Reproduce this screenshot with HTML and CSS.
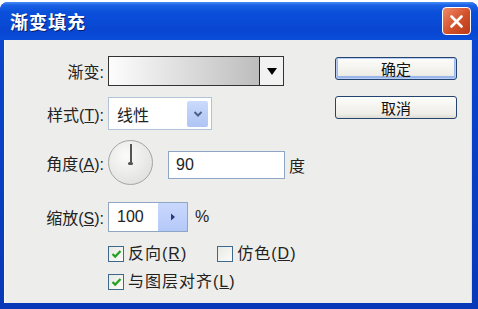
FILE: index.html
```html
<!DOCTYPE html>
<html lang="zh-CN">
<head>
    <meta charset="UTF-8">
    <meta name="viewport" content="width=device-width, initial-scale=1.0">
    <title>渐变填充</title>
    <link rel="stylesheet" href="styles.css">
</head>
<body>
    <div class="window">
        <div class="titlebar">
            <span class="title">渐变填充</span>
            <button class="close" aria-label="关闭">
                <svg width="15" height="15" viewBox="0 0 15 15">
                    <path d="M2.5 2.5 L12.5 12.5 M12.5 2.5 L2.5 12.5" stroke="#fff" stroke-width="2.6" stroke-linecap="round"/>
                </svg>
            </button>
        </div>
        <div class="content">
            <div class="form">
                <div class="row row-gradient">
                    <span class="label">渐变:</span>
                    <div class="gradient-box">
                        <div class="swatch"></div>
                        <div class="drop"><span class="tri"></span></div>
                    </div>
                </div>
                <div class="row row-style">
                    <span class="label">样式(<u>T</u>):</span>
                    <div class="select">
                        <span class="select-text">线性</span>
                        <span class="select-btn">
                            <svg width="10" height="8" viewBox="0 0 10 8">
                                <path d="M1.5 2 L5 5.5 L8.5 2" fill="none" stroke="#4d6185" stroke-width="2"/>
                            </svg>
                        </span>
                    </div>
                </div>
                <div class="row row-angle">
                    <span class="label">角度(<u>A</u>):</span>
                    <div class="dial"><span class="needle"></span><span class="hub"></span></div>
                    <div class="field angle-field">90</div>
                    <span class="unit">度</span>
                </div>
                <div class="row row-scale">
                    <span class="label">缩放(<u>S</u>):</span>
                    <div class="field scale-field">
                        <span class="scale-value">100</span>
                        <span class="scale-btn">
                            <svg width="6" height="8" viewBox="0 0 6 8">
                                <path d="M1 0.5 L5 4 L1 7.5 Z" fill="#2a3b7a"/>
                            </svg>
                        </span>
                    </div>
                    <span class="unit unit-pct">%</span>
                </div>
                <div class="check-row">
                    <label class="check"><span class="box checked"><svg width="11" height="10" viewBox="0 0 11 10"><path d="M1.5 5 L4.2 7.6 L9.5 2" fill="none" stroke="#21a121" stroke-width="2.2"/></svg></span><span class="check-text">反向(<u>R</u>)</span></label>
                    <label class="check check-dither"><span class="box"></span><span class="check-text">仿色(<u>D</u>)</span></label>
                </div>
                <div class="check-row">
                    <label class="check"><span class="box checked"><svg width="11" height="10" viewBox="0 0 11 10"><path d="M1.5 5 L4.2 7.6 L9.5 2" fill="none" stroke="#21a121" stroke-width="2.2"/></svg></span><span class="check-text">与图层对齐(<u>L</u>)</span></label>
                </div>
            </div>
            <div class="buttons">
                <button class="btn btn-default">确定</button>
                <button class="btn">取消</button>
            </div>
        </div>
    </div>
</body>
</html>
```

FILE: styles.css
```css
body {
    margin: 0;
    background: #fff;
    font-family: "Liberation Sans", "Noto Sans CJK SC", sans-serif;
    color: #222;
}
.window {
    margin-top: 2px;
    width: 478px;
    height: 307px;
    box-sizing: border-box;
    display: flex;
    flex-direction: column;
    background: linear-gradient(#0a47d0, #0838b8);
    border-radius: 8px 8px 0 0;
    overflow: hidden;
}
.titlebar {
    height: 38px;
    display: flex;
    align-items: center;
    justify-content: space-between;
    padding: 0 7px 0 10px;
    background: linear-gradient(#4a90f5 0, #1c62e6 3px, #0b50da 10px, #0846d2 28px, #0a4dd8 38px);
}
.title {
    color: #fff;
    font-family: "Noto Sans CJK SC", sans-serif;
    font-size: 18px;
    font-weight: bold;
    letter-spacing: 1px;
    text-shadow: 1px 1px 0 #0a1f6a;
}
.close {
    width: 29px;
    height: 28px;
    padding: 0;
    border: 1px solid #fff;
    border-radius: 4px;
    background: linear-gradient(135deg, #f08a66, #d2512b 55%, #b8391a);
    display: flex;
    align-items: center;
    justify-content: center;
}
.content {
    flex: 1;
    margin: 0 6px 6px 4px;
    background: #ededeb;
    display: flex;
    box-shadow: inset 1px 0 0 #f7f7f5, inset -1px 0 0 #dcdcda;
}
.form {
    flex: 1;
    display: flex;
    flex-direction: column;
}
.row {
    display: flex;
    align-items: center;
    font-size: 16px;
}
.label {
    width: 100px;
    margin-right: 4px;
    text-align: right;
    white-space: nowrap;
}
.row-gradient {
    margin-top: 16px;
}
.gradient-box {
    width: 174px;
    height: 28px;
    border: 1px solid #333;
    display: flex;
    background: #f4f4f4;
}
.swatch {
    width: 150px;
    border-right: 1px solid #222;
    background: linear-gradient(to right, #fdfdfd, #bdbdbd);
}
.drop {
    flex: 1;
    display: flex;
    align-items: center;
    justify-content: center;
    background: #f2f2f2;
}
.tri {
    width: 0;
    height: 0;
    border-left: 5px solid transparent;
    border-right: 5px solid transparent;
    border-top: 7px solid #000;
}
.row-style {
    margin-top: 11px;
}
.select {
    width: 104px;
    height: 33px;
    border: 1px solid #b3c3d8;
    background: #fff;
    display: flex;
    align-items: center;
    justify-content: space-between;
    padding: 0 3px 0 8px;
    box-sizing: border-box;
}
.select-btn {
    width: 21px;
    height: 26px;
    border-radius: 2px;
    background: linear-gradient(#cbdafc, #aec4f4);
    display: flex;
    align-items: center;
    justify-content: center;
}
.row-angle {
    margin-top: 10px;
}
.dial {
    width: 43px;
    height: 43px;
    border: 1px solid #a4a4a4;
    border-radius: 50%;
    background: radial-gradient(circle at 40% 35%, #fbfbfb, #e4e4e2 70%, #d8d8d6);
    display: flex;
    flex-direction: column;
    align-items: center;
}
.needle {
    margin-top: 3px;
    width: 2px;
    height: 18px;
    background: #555;
}
.hub {
    width: 5px;
    height: 3px;
    border-radius: 2px;
    background: #555;
}
.field {
    border: 1px solid #8ea6c4;
    background: #fff;
    box-sizing: border-box;
}
.angle-field {
    margin-left: 15px;
    margin-top: 4px;
    width: 117px;
    height: 28px;
    line-height: 26px;
    padding-left: 7px;
}
.unit {
    margin-left: 4px;
    margin-top: 4px;
}
.row-scale {
    margin-top: 17px;
}
.scale-field {
    width: 80px;
    height: 30px;
    display: flex;
}
.scale-value {
    flex: 1;
    line-height: 28px;
    padding-left: 8px;
}
.scale-btn {
    width: 29px;
    background: linear-gradient(#c9d8fd, #b4c8f8);
    display: flex;
    align-items: center;
    justify-content: center;
}
.unit-pct {
    margin-left: 7px;
    margin-top: 0;
}
.check-row {
    display: flex;
    margin-left: 104px;
    margin-top: 13px;
    font-size: 16px;
    line-height: 17px;
}
.check-row + .check-row {
    margin-top: 11px;
}
.check {
    display: flex;
    align-items: center;
    gap: 4px;
    white-space: nowrap;
}
.check-text {
    letter-spacing: 1px;
}
.check-dither {
    margin-left: 30px;
}
.box {
    width: 14px;
    height: 14px;
    border: 1px solid #3d6a8c;
    background: linear-gradient(135deg, #e8e8e4, #fbfbf9);
    display: flex;
    align-items: center;
    justify-content: center;
}
.buttons {
    width: 122px;
    margin-right: 15px;
    padding-top: 17px;
    display: flex;
    flex-direction: column;
    gap: 16px;
}
.btn {
    height: 23px;
    padding: 0;
    border: 1px solid #24436e;
    border-radius: 3px;
    background: linear-gradient(#fdfdfb, #eeede7 80%, #dcdbd3);
    font-family: "Noto Sans CJK SC", sans-serif;
    font-size: 15px;
    line-height: 19px;
    color: #111;
}
.btn-default {
    box-shadow: inset 0 0 0 1px #b8cdf3, inset 0 -1px 0 2px #9bb7ea;
}
```
